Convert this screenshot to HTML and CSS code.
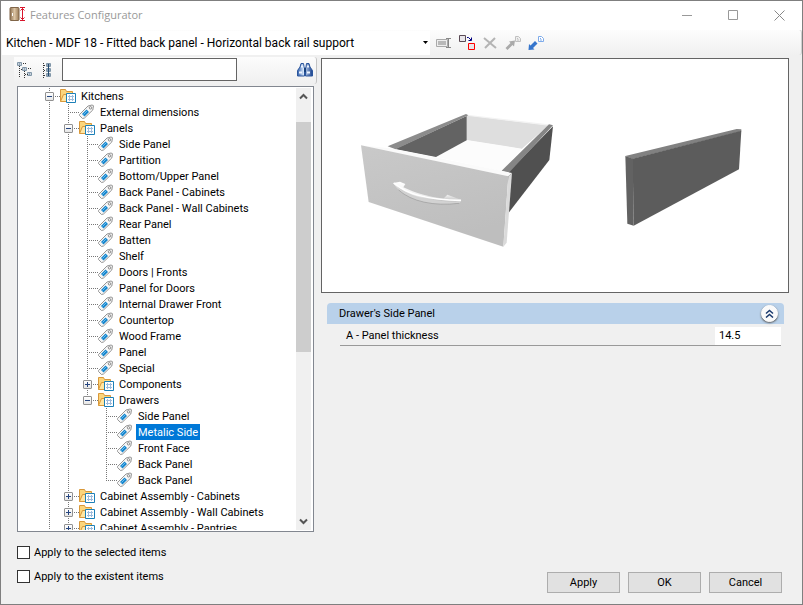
FILE: index.html
```html
<!DOCTYPE html>
<html lang="en">
<head>
    <meta charset="UTF-8">
    <meta name="viewport" content="width=device-width, initial-scale=1.0">
    <title>Features Configurator</title>
    <link rel="stylesheet" href="styles.css">
</head>
<body>

<svg class="sprites" aria-hidden="true">
    <linearGradient id="door" x1="0" x2="1"><stop offset="0" stop-color="#8f7354"/><stop offset=".5" stop-color="#dcc5a5"/><stop offset="1" stop-color="#9b7c58"/></linearGradient>
    <linearGradient id="blue" x1="0" x2="1"><stop offset="0" stop-color="#2b5ba8"/><stop offset=".4" stop-color="#d5e5fa"/><stop offset="1" stop-color="#163f8c"/></linearGradient>
    <linearGradient id="front" x2=".4" y2="1"><stop offset="0" stop-color="#c9c9c9"/><stop offset="1" stop-color="#bebebe"/></linearGradient>
    <linearGradient id="handle" y2="1" x2="0"><stop offset="0" stop-color="#fff"/><stop offset=".6" stop-color="#eee"/><stop offset="1" stop-color="#aaa"/></linearGradient>
    <symbol id="folder" viewBox="0 0 16 16">
        <path d="M.5 13.500v-12h5l1 2h6v3" fill="#fbd57c" stroke="#d9983a"/>
        <path d="M.5 13.500l3-7h10v7z" fill="#ffe6a3" stroke="#d9983a"/>
        <path d="M6.500 5.500h9v9h-9z" fill="#fff" stroke="#1c80b8"/>
        <path d="M8 8.500h6M8 11.500h6M9.500 7v6M12.500 7v6" fill="none" stroke="#9dbbdc"/>
    </symbol>
    <symbol id="tag" viewBox="0 0 16 16">
        <path d="M.5 10.500L9 2l4-1 1.500.7-.7 4.300L5.500 14l-2 .5-3-3z" fill="#f6f6f6" stroke="#959595"/>
        <circle cx="11.500" cy="3.800" r="1.200" fill="#fff" stroke="#888"/>
        <path d="M3 10L7.500 5.500l2.500 2.500L5.500 12.500z" fill="#1685cc"/>
        <path d="M4.500 10.500l4-4" stroke="#69bdf0"/>
    </symbol>
</svg>

<div class="window">
    <header class="titlebar">
        <svg class="app-icon" width="17" height="16" viewBox="0 0 17 16">
            <rect x="1" y=".5" width="9" height="13" rx="1" fill="url(#door)" stroke="#806548"/>
            <path d="M3.500 6v3" stroke="#fff"/>
            <path d="M11 .5h5M11 13.500h5M13.500 1v12M11.500 3.500l2-2 2 2M11.500 10.500l2 2 2-2" fill="none" stroke="#d8152c"/>
        </svg>
        <h1>Features Configurator</h1>
        <div class="window-buttons">
            <button aria-label="Minimize"><svg width="11" height="11"><path d="M0 5.500h10" stroke="#999"/></svg></button>
            <button aria-label="Maximize"><svg width="11" height="11"><path d="M.5.5h9v9h-9z" fill="none" stroke="#999"/></svg></button>
            <button aria-label="Close"><svg width="11" height="11"><path d="M.5.5l10 10M10.500.5l-10 10" stroke="#888"/></svg></button>
        </div>
    </header>

    <div class="toolbar">
        <div class="combo">
            <select aria-label="Configuration">
                <option>Kitchen - MDF 18 - Fitted back panel - Horizontal back rail support</option>
            </select>
            <svg class="combo-arrow" width="5" height="3"><path d="M0 0h5L2.500 3z" fill="#000"/></svg>
        </div>
        <button class="tool" aria-label="Rename">
            <svg width="17" height="16"><path d="M.5 4.500h11v7H.5z" fill="#eee" stroke="#aaa"/><path d="M2 6h8v4H2z" fill="#b9b9b9"/><path d="M10 3.500h5M10 12.500h5M12.500 4v8" stroke="#888" fill="none"/></svg>
        </button>
        <button class="tool" aria-label="Replace">
            <svg width="17" height="16"><path d="M.5.5h6v6h-6z" fill="#e8e6ea" stroke="#5a4a55"/><path d="M9.500 8.500h6v6h-6z" fill="#e8e6ea" stroke="#f00"/><path d="M8 2.500h1.500L12 5M12.500 2.500v3h-3" fill="none" stroke="#000080"/></svg>
        </button>
        <button class="tool" aria-label="Delete">
            <svg width="17" height="16"><path d="M2 3l12 10M13 3L3 13" stroke="#b4b4b4" stroke-width="2"/></svg>
        </button>
        <button class="tool" aria-label="Import">
            <svg width="17" height="16"><path d="M.5 13l5-5L4 6.500l6-1-1 6L7.500 10l-5 5z" fill="#aaa"/><path d="M10.500 1.500h3l2 2v3h-5zM12 3.500h1M12 5h2" fill="#eee" stroke="#c0c0c0"/></svg>
        </button>
        <button class="tool" aria-label="Export">
            <svg width="17" height="16"><path d="M.5 15l.5-6 1.500 1.500L7 6l2.500 2.500L5 13l1.500 1.500z" fill="#3575cc"/><path d="M10.500 1.500h3l2 2v3h-5zM12 3.500h1M12 5h2" fill="#fff" stroke="#7eabea"/></svg>
        </button>
    </div>

    <main class="content">
        <section class="left">
            <div class="search-bar">
                <button class="tool" aria-label="Collapse tree">
                    <svg width="16" height="16"><g fill="#fff" stroke="#8096a8"><path d="M.5.5h4v3h-4zM5.500 5.500h4v3h-4zM10.500 10.500h4v3h-4z"/></g><path d="M1.500 2h2M6.500 7h2M11.500 12h2" stroke="#244b70"/><path d="M2.500 4v11M4 7.500h2M7.500 9v7M8 12.500h3M6 1.500h3M11 6.500h3" stroke="#333" stroke-dasharray="1 1"/></svg>
                </button>
                <button class="tool" aria-label="Expand tree">
                    <svg width="16" height="16"><path d="M3.500 1v15M4 3.500h3M4 8.500h3M4 13.500h3" stroke="#333" stroke-dasharray="1 1"/><g fill="#fff" stroke="#8096a8"><path d="M6.500 1.500h4v3h-4zM6.500 6.500h4v3h-4zM6.500 11.500h4v3h-4z"/></g><path d="M7 3h3M7 8h3M7 13h3M8.500 2v12" stroke="#244b70"/></svg>
                </button>
                <input class="search" type="text" aria-label="Search">
                <button class="tool find" aria-label="Find">
                    <svg width="16" height="14"><path d="M4 .5h2.500l.5 3 .5 2V13h-7V7.500L3 4zM9.500.5H12l1 3.500 2.500 3.500V13h-7V5.500l.5-2z" fill="url(#blue)" stroke="#2a559c"/><path d="M7 5h2v4H7z" fill="#17417f"/><path d="M2 9.500h3M10 9.500h3M4 3.500h2M10 3.500h2" stroke="#eef5ff" stroke-width="2"/></svg>
                </button>
            </div>

            <div class="tree-box">
                <ul class="tree">
                    <li>
                        <div class="row"><button class="toggle" aria-label="Collapse"></button><svg class="icon"><use href="#folder"/></svg><span>Kitchens</span></div>
                        <ul>
                            <li><div class="row leaf"><svg class="icon"><use href="#tag"/></svg><span>External dimensions</span></div></li>
                            <li>
                                <div class="row"><button class="toggle" aria-label="Collapse"></button><svg class="icon"><use href="#folder"/></svg><span>Panels</span></div>
                                <ul>
                                    <li><div class="row leaf"><svg class="icon"><use href="#tag"/></svg><span>Side Panel</span></div></li>
                                    <li><div class="row leaf"><svg class="icon"><use href="#tag"/></svg><span>Partition</span></div></li>
                                    <li><div class="row leaf"><svg class="icon"><use href="#tag"/></svg><span>Bottom/Upper Panel</span></div></li>
                                    <li><div class="row leaf"><svg class="icon"><use href="#tag"/></svg><span>Back Panel - Cabinets</span></div></li>
                                    <li><div class="row leaf"><svg class="icon"><use href="#tag"/></svg><span>Back Panel - Wall Cabinets</span></div></li>
                                    <li><div class="row leaf"><svg class="icon"><use href="#tag"/></svg><span>Rear Panel</span></div></li>
                                    <li><div class="row leaf"><svg class="icon"><use href="#tag"/></svg><span>Batten</span></div></li>
                                    <li><div class="row leaf"><svg class="icon"><use href="#tag"/></svg><span>Shelf</span></div></li>
                                    <li><div class="row leaf"><svg class="icon"><use href="#tag"/></svg><span>Doors | Fronts</span></div></li>
                                    <li><div class="row leaf"><svg class="icon"><use href="#tag"/></svg><span>Panel for Doors</span></div></li>
                                    <li><div class="row leaf"><svg class="icon"><use href="#tag"/></svg><span>Internal Drawer Front</span></div></li>
                                    <li><div class="row leaf"><svg class="icon"><use href="#tag"/></svg><span>Countertop</span></div></li>
                                    <li><div class="row leaf"><svg class="icon"><use href="#tag"/></svg><span>Wood Frame</span></div></li>
                                    <li><div class="row leaf"><svg class="icon"><use href="#tag"/></svg><span>Panel</span></div></li>
                                    <li><div class="row leaf"><svg class="icon"><use href="#tag"/></svg><span>Special</span></div></li>
                                    <li><div class="row"><button class="toggle closed" aria-label="Expand"></button><svg class="icon"><use href="#folder"/></svg><span>Components</span></div></li>
                                    <li>
                                        <div class="row"><button class="toggle" aria-label="Collapse"></button><svg class="icon"><use href="#folder"/></svg><span>Drawers</span></div>
                                        <ul>
                                            <li><div class="row leaf"><svg class="icon"><use href="#tag"/></svg><span>Side Panel</span></div></li>
                                            <li><div class="row leaf"><svg class="icon"><use href="#tag"/></svg><span class="selected">Metalic Side</span></div></li>
                                            <li><div class="row leaf"><svg class="icon"><use href="#tag"/></svg><span>Front Face</span></div></li>
                                            <li><div class="row leaf"><svg class="icon"><use href="#tag"/></svg><span>Back Panel</span></div></li>
                                            <li><div class="row leaf"><svg class="icon"><use href="#tag"/></svg><span>Back Panel</span></div></li>
                                        </ul>
                                    </li>
                                </ul>
                            </li>
                            <li><div class="row"><button class="toggle closed" aria-label="Expand"></button><svg class="icon"><use href="#folder"/></svg><span>Cabinet Assembly - Cabinets</span></div></li>
                            <li><div class="row"><button class="toggle closed" aria-label="Expand"></button><svg class="icon"><use href="#folder"/></svg><span>Cabinet Assembly - Wall Cabinets</span></div></li>
                            <li class="more"><div class="row"><button class="toggle closed" aria-label="Expand"></button><svg class="icon"><use href="#folder"/></svg><span>Cabinet Assembly - Pantries</span></div></li>
                        </ul>
                    </li>
                </ul>
                <div class="scrollbar">
                    <svg width="15" height="17"><path d="M4 10.500l3.500-3.500 3.500 3.500" fill="none" stroke="#555" stroke-width="2"/></svg>
                    <div class="track"><div class="thumb"></div></div>
                    <svg width="15" height="17"><path d="M4 6.500l3.500 3.500 3.500-3.500" fill="none" stroke="#555" stroke-width="2"/></svg>
                </div>
            </div>
        </section>

        <section class="right">
            <div class="preview">
                <svg viewBox="322 59 466 233" role="img" aria-label="Drawer and side panel">
                    <!-- drawer -->
                    <g transform="translate(350 100) scale(.33333)">
                        <path d="M350 46L595 76 515 147 350 121z" fill="#dedede"/>
                        <path d="M352 44L606 74 596 77 350 47z" fill="#f3f3f3"/>
                        <path d="M350 120L515 146 455 213 260 171z" fill="#fcfcfc"/>
                        <path d="M135 147L350 48 350 121 258 171z" fill="#636363"/>
                        <path d="M113 139L348 42 355 46 137 148z" fill="#8c8c8c"/>
                        <path d="M473 218L609 79 598 180 476 338z" fill="#505050"/>
                        <path d="M455 212L597 73 609 76 476 219z" fill="#858585"/>
                        <path d="M33 136L120 145 486 219 475 229z" fill="#fafafa"/>
                        <path d="M33 136L475 229 460 440 56 306z" fill="url(#front)"/>
                        <path d="M475 229L486 219 470 428 460 440z" fill="#dadada"/>
                        <path d="M129 249L150 245 166 252 160 262C195 279 240 291 280 296L292 284 335 300 329 309C240 322 165 300 129 249z" fill="url(#handle)"/>
                        <path d="M134 252C175 290 240 306 332 304L329 310C240 322 165 300 134 252z" fill="#d2d2d2"/>
                        <path d="M132 249C170 284 240 300 333 301" fill="none" stroke="#fff" stroke-width="5"/>
                        <path d="M146 270C185 305 250 319 328 310" fill="none" stroke="#999" stroke-width="2"/>
                    </g>
                    <!-- side panel -->
                    <g transform="translate(610 110) scale(.33333)">
                        <path d="M46 138L380 57 394 58 394 64 68 147z" fill="#818181"/>
                        <path d="M68 146L394 62 387 178 71 347z" fill="#5c5c5c"/>
                        <path d="M46 138L69 146 71 347 52 341z" fill="#626262"/>
                    </g>
                </svg>
            </div>

            <div class="group">
                <div class="group-header">
                    <h2>Drawer's Side Panel</h2>
                    <button class="collapse" aria-label="Collapse group">
                        <svg width="9" height="9"><path d="M1 4.500l3.500-3 3.500 3M1 8.500l3.500-3 3.500 3" fill="none" stroke="#1b3a6e" stroke-width="1.500"/></svg>
                    </button>
                </div>
                <div class="property">
                    <label for="thickness">A - Panel thickness</label>
                    <input id="thickness" type="text" value="14.5">
                </div>
            </div>
        </section>
    </main>

    <footer class="footer">
        <div class="options">
            <label><input type="checkbox"> Apply to the selected items</label>
            <label><input type="checkbox"> Apply to the existent items</label>
        </div>
        <div class="actions">
            <button>Apply</button>
            <button>OK</button>
            <button>Cancel</button>
        </div>
    </footer>
</div>

</body>
</html>
```
FILE: styles.css
```css
* {
    box-sizing: border-box;
}
body {
    margin: 0;
    font-family: Roboto, "Liberation Sans", sans-serif;
    font-size: 11px;
    color: #000;
}
h1, h2 {
    margin: 0;
    font-weight: normal;
}
button, input, select {
    font: inherit;
    color: inherit;
}
button {
    padding: 0;
    border: none;
    background: none;
}
ul {
    list-style: none;
    margin: 0;
    padding: 0;
}
svg {
    display: block;
}
.sprites {
    position: absolute;
    width: 0;
    height: 0;
}
.window {
    display: flex;
    flex-direction: column;
    height: 100vh;
    background-color: #f0f0f0;
    border: 1px solid #7f7f7f;
}

/* title bar */
.titlebar {
    display: flex;
    align-items: center;
    height: 29px;
    padding-left: 8px;
    background-color: #fff;
}
.app-icon {
    margin-bottom: 2px;
}
.titlebar h1 {
    flex: 1;
    margin-left: 4px;
    padding-bottom: 2px;
    font-family: "Open Sans", sans-serif;
    font-size: 11px;
    color: #999;
}
.window-buttons {
    display: flex;
}
.window-buttons button {
    display: flex;
    justify-content: center;
    align-items: center;
    width: 46px;
    height: 28px;
}

/* top toolbar */
.toolbar {
    display: flex;
    align-items: center;
    gap: 6px;
    height: 25px;
    padding-left: 1px;
    background: linear-gradient(#fdfdfd, #f0f0f0);
    border-right: 1px solid #d0d0d0;
    border-radius: 0 3px 3px 0;
}
.combo {
    display: flex;
    align-items: center;
    width: 428px;
    height: 24px;
    padding-right: 2px;
    background-color: #fff;
}
.combo select {
    flex: 1;
    padding: 0 4px;
    border: none;
    background: none;
    appearance: none;
    font-size: 12px;
}
.tool {
    display: flex;
    justify-content: center;
    width: 17px;
}

/* content */
.content {
    flex: 1;
    display: flex;
    gap: 7px;
    min-height: 0;
    padding: 2px 13px 0 13px;
}
.left {
    display: flex;
    flex-direction: column;
    width: 300px;
}
.search-bar {
    display: flex;
    align-items: center;
    gap: 6px;
    height: 27px;
    padding: 0 3px 2px 2px;
    margin: 0 -3px 2px 0;
    background: linear-gradient(#fcfcfc, #f0f0f0);
    border-right: 1px solid #c4c4c4;
    border-radius: 0 3px 3px 0;
}
.search {
    width: 175px;
    height: 23px;
    border: 1px solid #646464;
    background-color: #fff;
}
.find {
    margin-left: auto;
}

/* tree */
.tree-box {
    flex: 1;
    display: flex;
    min-height: 0;
    margin-left: 3px;
    padding: 1px;
    background-color: #fff;
    border: 1px solid #828790;
}
.tree {
    flex: 1;
    overflow: hidden;
    padding-left: 26px;
}
.tree ul {
    padding-left: 19px;
}
.tree li {
    position: relative;
}
.tree li::before {
    content: "";
    position: absolute;
    left: 4px;
    top: 0;
    bottom: 0;
    width: 1px;
    background: repeating-linear-gradient(#777 0 1px, transparent 1px 2px);
}
.tree ul li:last-child:not(.more)::before {
    bottom: auto;
    height: 9px;
}
.row {
    display: flex;
    align-items: center;
    height: 16px;
    background: repeating-linear-gradient(90deg, #777 0 1px, transparent 1px 2px) 4px 8px / 11px 1px no-repeat;
}
.toggle {
    position: relative;
    width: 9px;
    height: 9px;
    margin-right: 6px;
    border: 1px solid #919191;
    border-radius: 1px;
    background:
        linear-gradient(#26467f, #26467f) center / 5px 1px no-repeat,
        linear-gradient(#fff, #e6e6e6);
}
.toggle.closed {
    background:
        linear-gradient(#26467f, #26467f) center / 5px 1px no-repeat,
        linear-gradient(#26467f, #26467f) center / 1px 5px no-repeat,
        linear-gradient(#fff, #e6e6e6);
}
.leaf {
    padding-left: 15px;
}
.icon {
    width: 16px;
    height: 16px;
    margin-right: 3px;
}
.row span {
    padding: 2px 2px 0;
    line-height: 14px;
    white-space: nowrap;
}
.row .selected {
    background-color: #0078d7;
    color: #fff;
}
.scrollbar {
    display: flex;
    flex-direction: column;
    width: 15px;
    margin-right: 1px;
    background-color: #f0f0f0;
}
.track {
    flex: 1;
    padding-top: 17px;
}
.thumb {
    height: 230px;
    background-color: #cdcdcd;
}

/* preview and properties */
.right {
    flex: 1;
    min-width: 0;
}
.preview {
    height: 235px;
    margin-top: 1px;
    background-color: #fff;
    border: 1px solid #646464;
}
.preview svg {
    width: 100%;
    height: 100%;
}
.group {
    margin: 10px 5px 0 6px;
}
.group-header {
    display: flex;
    align-items: center;
    justify-content: space-between;
    height: 21px;
    padding: 0 6px 0 12px;
    background-color: #b9d1ea;
    border-radius: 4px 4px 0 0;
}
.group-header h2 {
    font-size: 11px;
}
.collapse {
    display: flex;
    justify-content: center;
    align-items: center;
    width: 17px;
    height: 17px;
    border: 1px solid #fff;
    border-radius: 50%;
    background-color: #fafafa;
    box-shadow: 0 1px 2px #555;
}
.property {
    display: flex;
    align-items: center;
    justify-content: space-between;
    height: 22px;
    margin: 0 3px 0 13px;
    padding: 2px 0 0 6px;
    border-bottom: 1px solid #999;
}
.property input {
    width: 66px;
    height: 18px;
    padding: 0 4px;
    border: none;
    background-color: #fff;
}

/* footer */
.footer {
    display: flex;
    justify-content: space-between;
    align-items: flex-end;
    height: 72px;
    padding: 8px 20px 11px 16px;
}
.options {
    display: flex;
    flex-direction: column;
    gap: 8px;
    align-self: flex-start;
    padding-top: 4px;
}
.options label {
    display: flex;
    align-items: center;
    gap: 4px;
    height: 16px;
}
.options input {
    width: 13px;
    height: 13px;
    margin: 0;
    border: 1px solid #333;
    background-color: #fff;
    appearance: none;
}
.options input:checked {
    background-color: #0078d7;
}
.actions {
    display: flex;
    gap: 8px;
}
.actions button {
    width: 73px;
    height: 21px;
    border: 1px solid #adadad;
    background-color: #e1e1e1;
}
```
